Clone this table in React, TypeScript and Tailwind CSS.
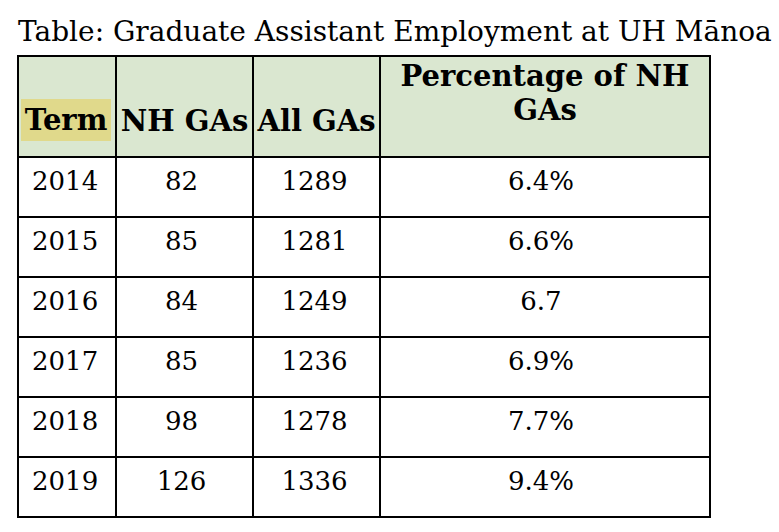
const rows = [
  { term: "2014", nh: "82", all: "1289", pct: "6.4%" },
  { term: "2015", nh: "85", all: "1281", pct: "6.6%" },
  { term: "2016", nh: "84", all: "1249", pct: "6.7" },
  { term: "2017", nh: "85", all: "1236", pct: "6.9%" },
  { term: "2018", nh: "98", all: "1278", pct: "7.7%" },
  { term: "2019", nh: "126", all: "1336", pct: "9.4%" },
]

export default function App() {
  return (
    <div className="w-[779px] h-[532px] bg-white text-black font-['DejaVu_Serif',serif] overflow-hidden">
      <p className="pl-[18px] pt-[12px] text-[28px] leading-[40px] whitespace-nowrap">
        Table: Graduate Assistant Employment at UH Mānoa
      </p>

      <table className="ml-[17px] mt-[3px] table-fixed border-collapse border-2 border-black">
        <colgroup>
          <col className="w-[98px]" />
          <col className="w-[137px]" />
          <col className="w-[127px]" />
          <col className="w-[330px]" />
        </colgroup>
        <thead>
          <tr className="h-[101px] bg-[#dae7d0] font-bold text-[29px]">
            <th className="border-2 border-black p-0 pb-[14px] align-bottom text-left">
              <span className="ml-[2px] inline-block h-[42px] w-[90px] text-center leading-[42px] bg-[#e0d98b]">Term</span>
            </th>
            <th className="border-2 border-black p-0 pb-[14px] align-bottom text-center whitespace-nowrap leading-[42px]">
              NH GAs
            </th>
            <th className="border-2 border-black p-0 pb-[14px] align-bottom text-center whitespace-nowrap leading-[42px]">
              All GAs
            </th>
            <th className="border-2 border-black p-0 pt-[2px] align-top text-center leading-[34px]">
              Percentage of NH
              <br />
              GAs
            </th>
          </tr>
        </thead>
        <tbody className="text-[26px]">
          {rows.map((r) => (
            <tr key={r.term} className="h-[60px]">
              <td className="border-2 border-black pl-[13px] pb-[12px] align-middle">{r.term}</td>
              <td className="border-2 border-black pr-[6px] pb-[12px] text-center align-middle">{r.nh}</td>
              <td className="border-2 border-black pr-[4px] pb-[12px] text-center align-middle">{r.all}</td>
              <td className="border-2 border-black pr-[8px] pb-[12px] text-center align-middle">{r.pct}</td>
            </tr>
          ))}
        </tbody>
      </table>
    </div>
  )
}
